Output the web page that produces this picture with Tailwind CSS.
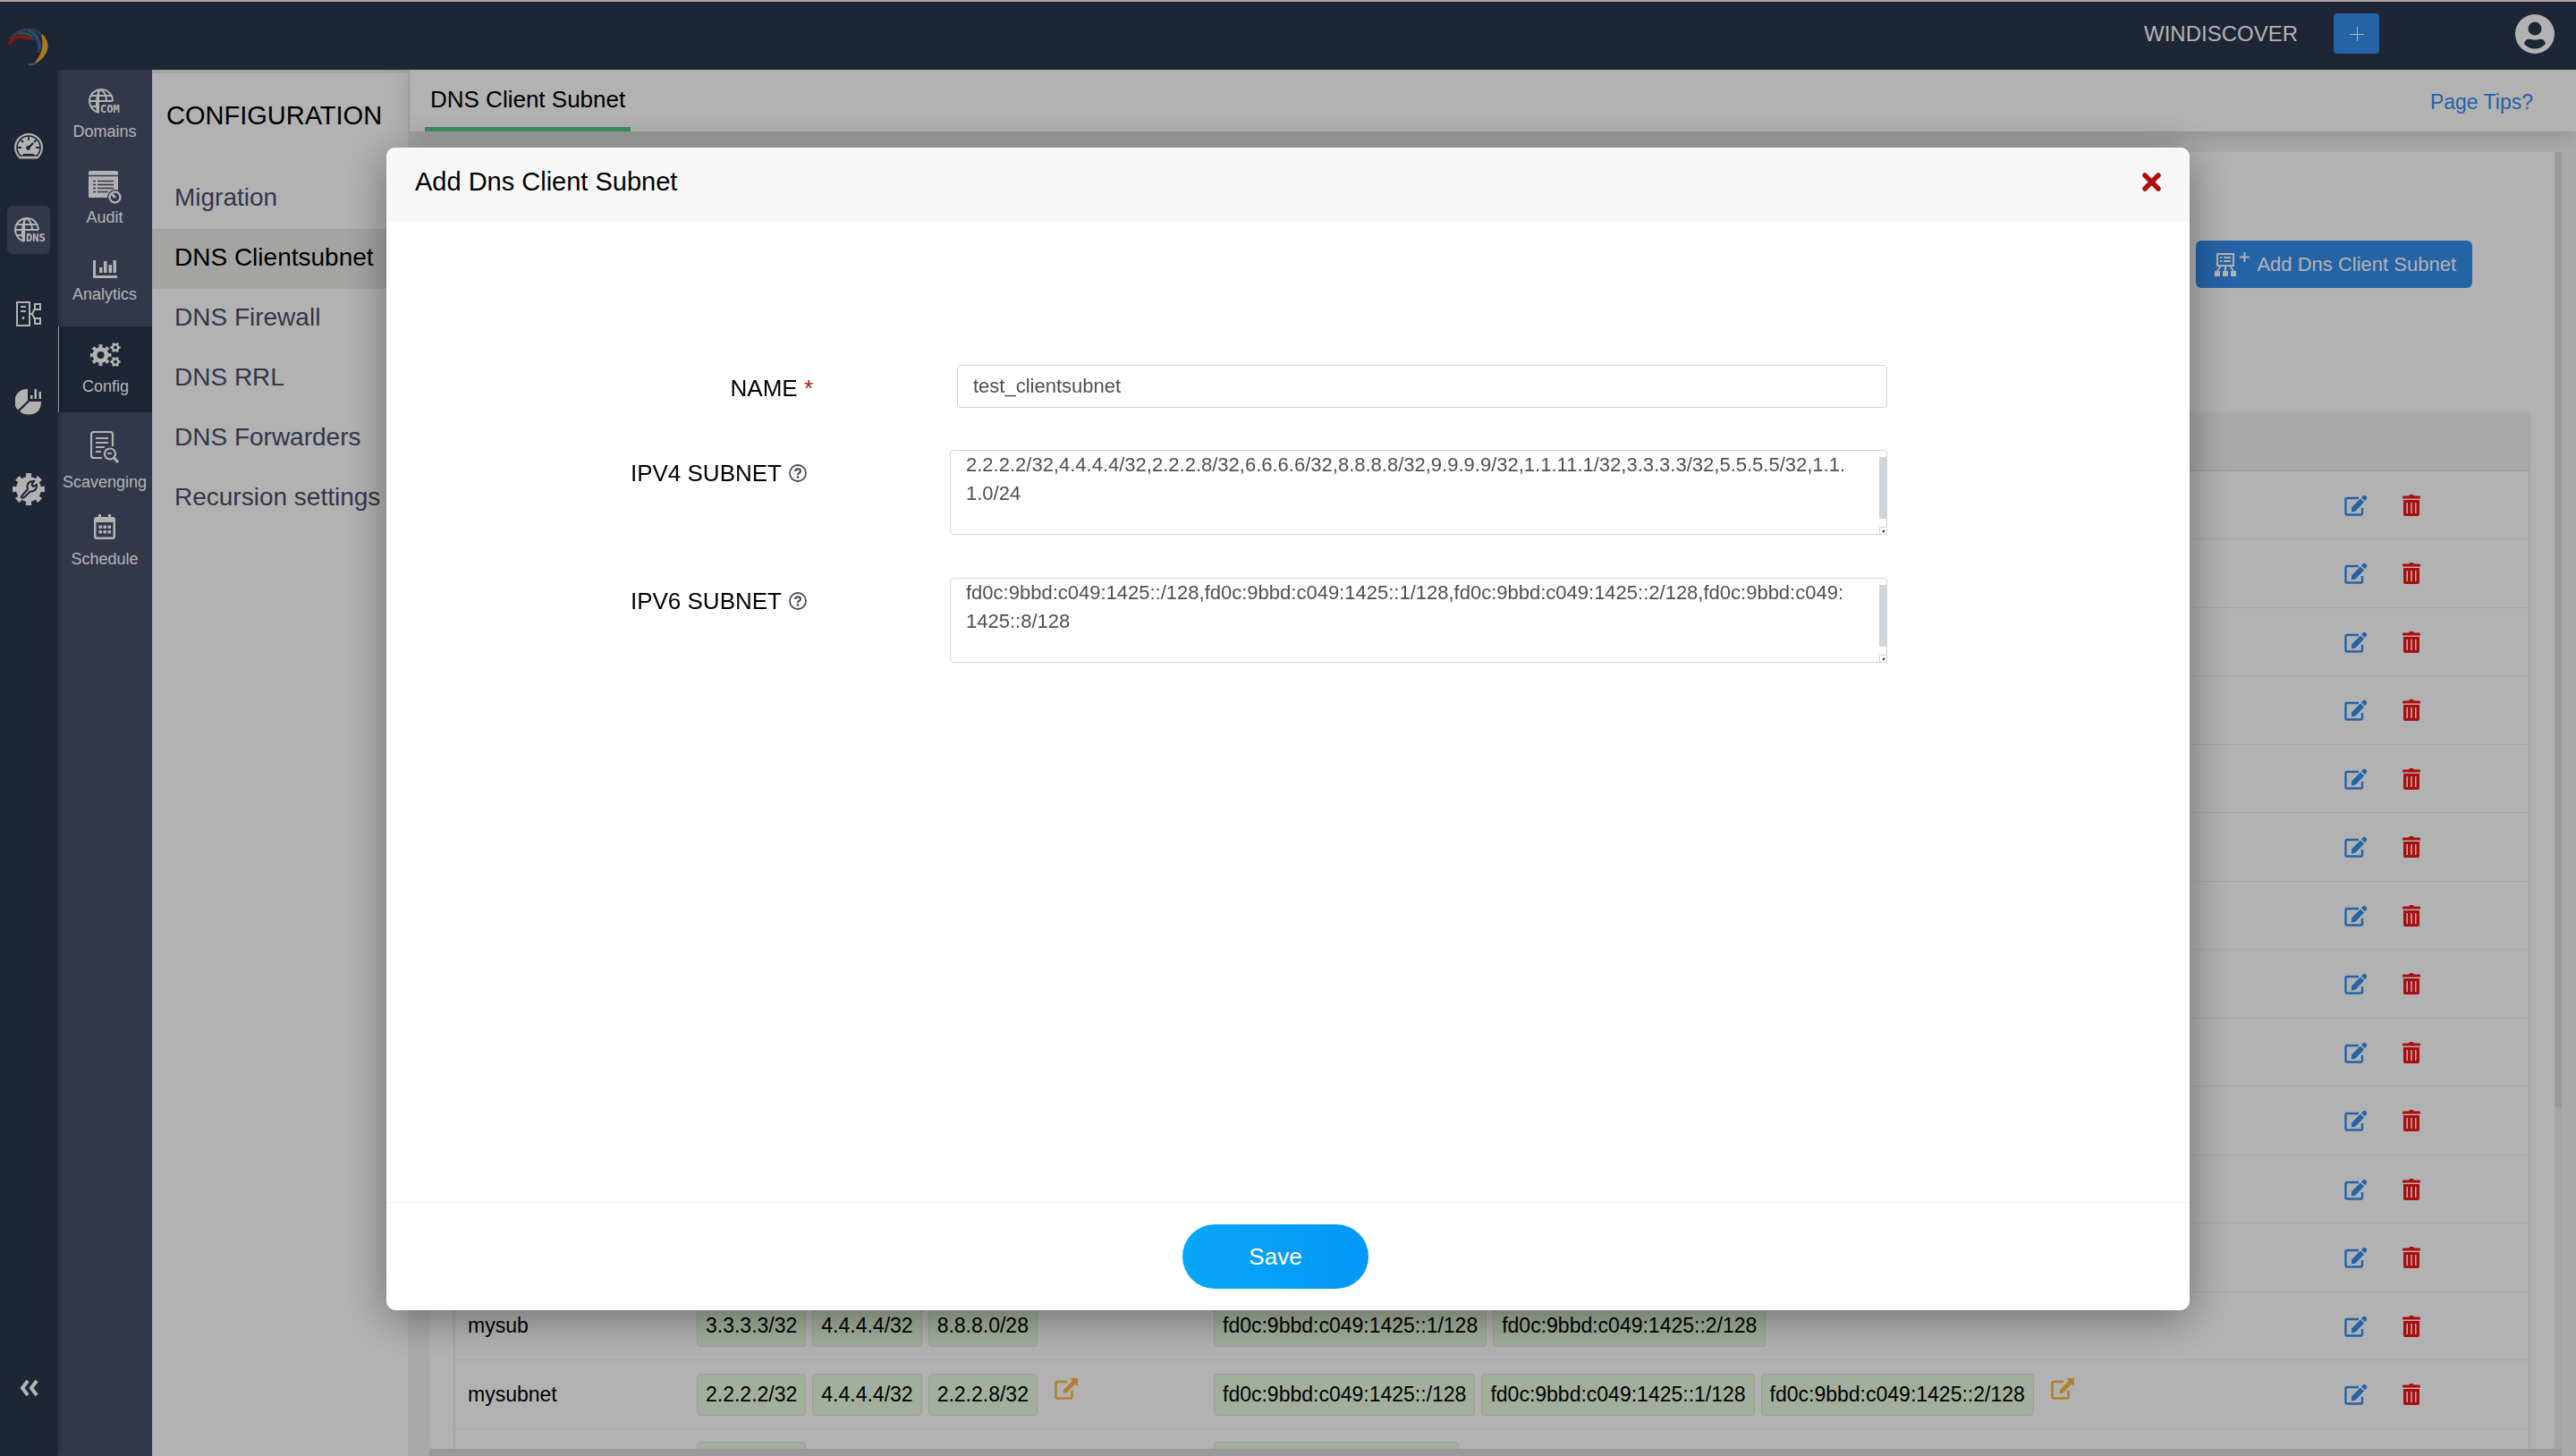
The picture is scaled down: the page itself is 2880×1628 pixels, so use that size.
<!DOCTYPE html>
<html lang="en">
<head>
    <meta charset="UTF-8">
    <meta name="viewport" content="width=device-width, initial-scale=1.0">
    <title>DNS Client Subnet</title>
    <script src="https://cdn.jsdelivr.net/npm/@tailwindcss/browser@4"></script>
    <style>
        body {
            font-family: 'Liberation Sans', Arial, sans-serif;
        }
    </style>
</head>
<body class="h-screen overflow-hidden bg-white text-black">

    <!-- Shared icons -->
    <svg class="hidden" aria-hidden="true">
        <symbol id="icon-globe" viewBox="0 0 34 28">
            <g fill="none" stroke="currentColor" stroke-width="2">
                <path d="M27 14A13 13 0 1 0 11 26.700"/>
                <path d="M11 27V1.500M14 1C8 5 8 22 11 27M14 1C18 4 20 8 20 14"/>
                <path d="M3 8H25M1 14H27M2 20H11"/>
            </g>
        </symbol>
        <symbol id="icon-edit" viewBox="0 0 26 24">
            <path d="M16 4H3Q1.500 4 1.500 5.500V21Q1.500 22.500 3 22.500H18.500Q20 22.500 20 21V15" fill="none" stroke="currentColor" stroke-width="2.400"/>
            <path d="M18 4.500L22 8.500L12.500 18.500L8 19.500L8 14.500Z" fill="currentColor"/>
            <path d="M19 3.500L21 1.200Q22.500 0 24.300 1.700Q26 3.500 24.800 5L23 7.300Z" fill="currentColor"/>
        </symbol>
        <symbol id="icon-trash" viewBox="0 0 20 24">
            <path d="M7 1.500Q7.300 0 9 0H11Q12.700 0 13 1.500H19Q20 1.500 20 3V4.500H0V3Q0 1.500 1 1.500Z" fill="currentColor"/>
            <path fill-rule="evenodd" d="M1 6H19V22Q19 24 17 24H3Q1 24 1 22ZM4.500 9V21H6V9ZM9.200 9V21H10.800V9ZM14 9V21H15.500V9Z" fill="currentColor"/>
        </symbol>
        <symbol id="icon-external" viewBox="0 0 26 24">
            <path d="M14 4H3Q1.500 4 1.500 5.500V21Q1.500 22.500 3 22.500H18Q19.500 22.500 19.500 21V14" fill="none" stroke="currentColor" stroke-width="2.600"/>
            <path d="M17 0H26V9L23 6.500L13.500 16.500L9.500 17L10 13L20 3Z" fill="currentColor"/>
        </symbol>
        <symbol id="icon-help" viewBox="0 0 20 20">
            <circle cx="10" cy="10" r="9" fill="none" stroke="currentColor" stroke-width="1.800"/>
            <path d="M7 8Q7 5.300 10 5.300Q13 5.300 13 7.800Q13 9.300 11.300 10Q10 10.600 10 12" fill="none" stroke="currentColor" stroke-width="2.200"/>
            <circle cx="10" cy="14.500" r="1.400" fill="currentColor"/>
        </symbol>
    </svg>

    <div class="flex h-full border-t-2 border-[#ffe4ea] overflow-hidden">

        <!-- Product rail -->
        <nav aria-label="Products" class="relative z-10 flex w-16 shrink-0 flex-col items-center bg-[#2c354c] text-white shadow-[2px_0_6px_rgba(0,0,0,0.3)]">
            <a href="#" aria-label="Home" class="mt-7">
                <svg class="h-11 w-12" viewBox="0 0 48 44" fill="none">
                    <path d="M3 14Q15 0 31 4Q40 8 43 16" stroke="#4d5568" stroke-width="3"/>
                    <path d="M28 8Q38 16 35 29M12 8Q22 7 30 15" stroke="#4d5568" stroke-width="3"/>
                    <path d="M2 20Q9 6 26 14" stroke="#c81e1e" stroke-width="3"/>
                    <path d="M14 7Q23 6 28 11" stroke="#3d8a5c" stroke-width="2"/>
                    <path d="M23 4Q35 6 37 25" stroke="#2f6fc4" stroke-width="3"/>
                    <path d="M39 9Q53 25 32 40Q44 26 39 9Z" fill="#f5a930" stroke="#f5a930" stroke-width="2"/>
                    <path d="M33 40Q29 43 24 42" stroke="#7b808c" stroke-width="2"/>
                </svg>
            </a>
            <a href="#" aria-label="Dashboard" class="mt-[62px] flex h-[54px] w-12 items-center justify-center">
                <svg class="h-[29px] w-8" viewBox="0 0 32 29">
                    <path d="M6 28.500Q0 23 0 16A16 16 0 0 1 32 16Q32 23 26 28.500Z" fill="currentColor"/>
                    <path d="M6.500 25Q3 21 3 16A13 13 0 0 1 29 16Q29 21 25.500 25Z" fill="none" stroke="#2c354c" stroke-width="1.600"/>
                    <g stroke="#2c354c" stroke-width="1.800">
                        <path d="M16 4V8M7.500 7.500L10 10M24.500 7.500L22 10M4 16H8M24 16H28M10 24H22"/>
                        <path d="M16 16L21 11" stroke-width="2.400"/>
                    </g>
                    <circle cx="15.500" cy="16.500" r="2.400" fill="#2c354c"/>
                </svg>
            </a>
            <a href="#" aria-label="DNS" class="mt-10 flex h-[54px] w-12 items-center justify-center rounded-md bg-[#4a506a] pl-1">
                <svg class="h-7 w-9 shrink-0" viewBox="0 0 36 28">
                    <use href="#icon-globe" width="34" height="28"/>
                    <rect x="12" y="16" width="24" height="12" fill="#4a506a"/>
                    <text x="13" y="27" font-family="DejaVu Sans Mono" font-weight="bold" font-size="12" fill="currentColor">DNS</text>
                </svg>
            </a>
            <a href="#" aria-label="Servers" class="mt-10 flex h-[54px] w-12 items-center justify-center">
                <svg class="h-7 w-7" viewBox="0 0 28 28" fill="none" stroke="currentColor" stroke-width="2">
                    <path d="M1 1H15V27H1Z"/>
                    <path d="M5 6H11M5 11H11"/>
                    <path d="M8 17V20" stroke-width="2.500"/>
                    <path d="M21 3H27V9H21ZM21 19H27V25H21Z"/>
                    <path d="M16 14H18L21 8M18 14L21 20"/>
                </svg>
            </a>
            <a href="#" aria-label="Reports" class="mt-11 flex h-[54px] w-12 items-center justify-center">
                <svg class="h-[30px] w-[30px]" viewBox="0 0 30 30" fill="currentColor">
                    <path d="M14 1A14 14 0 0 0 3 24.500L14 14Z"/>
                    <path d="M16 15H29Q29 29 15 29.500Q9 29.500 5 26Z"/>
                    <path d="M17 8H19.500V12H17ZM21.500 1H24V12H21.500ZM26.500 4H29V12H26.500Z"/>
                </svg>
            </a>
            <a href="#" aria-label="Settings" class="mt-11 flex h-[54px] w-12 items-center justify-center">
                <svg class="h-9 w-9" viewBox="0 0 36 36">
                    <circle cx="18" cy="18" r="15" fill="none" stroke="currentColor" stroke-width="6" pathLength="16" stroke-dasharray="1 1" stroke-dashoffset="0.500"/>
                    <circle cx="18" cy="18" r="14" fill="currentColor"/>
                    <path d="M10 26L17 18Q15 12 20 9.500L24 9L21.500 13L23 15L27 13Q27.500 19 22 20.500H20L12.500 27.500Q9 28 10 26Z" fill="none" stroke="#2c354c" stroke-width="2"/>
                </svg>
            </a>
            <button type="button" aria-label="Collapse" class="mt-auto mb-[66px]">
                <svg class="h-5 w-6" viewBox="0 0 24 20" fill="none" stroke="currentColor" stroke-width="4">
                    <path d="M11 2L5 10L11 18M21 2L15 10L21 18"/>
                </svg>
            </button>
        </nav>

        <div class="flex min-w-0 flex-1 flex-col">
            <!-- Top bar -->
            <header class="relative z-20 flex h-[76px] shrink-0 items-center justify-end bg-[#2c354c] pr-6 pb-[5px] text-white">
                <span class="text-2xl">WINDISCOVER</span>
                <button type="button" aria-label="Add" class="ml-10 flex h-[45px] w-[51px] items-center justify-center rounded bg-[#358eef]">
                    <svg class="h-4 w-4" viewBox="0 0 16 16" stroke="currentColor"><path d="M8.500 0V16M0 8.500H16"/></svg>
                </button>
                <button type="button" aria-label="Account" class="ml-38">
                    <svg class="h-11 w-11" viewBox="0 0 44 44">
                        <circle cx="22" cy="22" r="22" fill="currentColor"/>
                        <circle cx="22" cy="16" r="7.500" fill="#2c354c"/>
                        <path d="M10 33Q11 27 18 28Q22 29 26 28Q33 27 34 33Q29 38.500 22 38.500Q15 38.500 10 33Z" fill="#2c354c"/>
                    </svg>
                </button>
            </header>

            <div class="flex min-h-0 flex-1">
                <!-- Section nav -->
                <nav aria-label="Sections" class="flex w-[106px] shrink-0 flex-col bg-[#4a506a] text-lg/5 text-white">
                    <a href="#" class="flex h-[97px] flex-col items-center justify-end gap-[10px] pb-[18px]">
                        <svg class="h-7 w-9" viewBox="0 0 36 28">
                            <use href="#icon-globe" width="34" height="28"/>
                            <rect x="12" y="16" width="24" height="12" fill="#4a506a"/>
                            <text x="13" y="27" font-family="DejaVu Sans Mono" font-weight="bold" font-size="12" fill="currentColor">COM</text>
                        </svg>
                        Domains
                    </a>
                    <a href="#" class="flex h-24 flex-col items-center justify-end gap-[5px] pb-[18px]">
                        <svg class="h-[37px] w-[37px]" viewBox="0 0 37 37">
                            <path d="M2 0H31Q33 0 33 2V30H0V2Q0 0 2 0Z" fill="currentColor"/>
                            <path d="M0 5.500H33M5 11.500H8M10 11.500H28M5 15.500H8M10 15.500H28M5 19.500H8M10 19.500H28M5 23.500H8M10 23.500H22" stroke="#4a506a" stroke-width="1.500"/>
                            <circle cx="29.500" cy="29.500" r="8.500" fill="#4a506a"/>
                            <circle cx="29.500" cy="29.500" r="6" fill="none" stroke="currentColor" stroke-width="2.400"/>
                            <path d="M26 26L30 30" stroke="currentColor" stroke-width="3"/>
                        </svg>
                        Audit
                    </a>
                    <a href="#" class="flex h-[94px] flex-col items-center justify-end gap-2 pb-[26px]">
                        <svg class="h-[21px] w-[27px]" viewBox="0 0 27 21" fill="currentColor">
                            <path d="M0 1H3V18H27V21H1Q0 21 0 20ZM7 9H10.500V15H7ZM12 2H15.500V15H12ZM17.500 6H21V15H17.500ZM22.500 1H26V15H22.500Z"/>
                        </svg>
                        Analytics
                    </a>
                    <a href="#" aria-current="page" class="ml-px flex h-24 flex-col items-center justify-end gap-3 border-l border-white bg-[#2c354c] pb-[19px]">
                        <svg class="h-[27px] w-[34px]" viewBox="0 0 34 27" fill="none" stroke="currentColor">
                            <circle cx="11.500" cy="14" r="6.500" stroke-width="5"/>
                            <circle cx="11.500" cy="14" r="10" stroke-width="4" pathLength="16" stroke-dasharray="1 1" stroke-dashoffset="0.500"/>
                            <circle cx="28" cy="5.500" r="3.200" stroke-width="2.400"/>
                            <circle cx="28" cy="5.500" r="4.700" stroke-width="2" pathLength="12" stroke-dasharray="1 1" stroke-dashoffset="0.500"/>
                            <circle cx="28" cy="21.500" r="3.200" stroke-width="2.400"/>
                            <circle cx="28" cy="21.500" r="4.700" stroke-width="2" pathLength="12" stroke-dasharray="1 1" stroke-dashoffset="0.500"/>
                        </svg>
                        Config
                    </a>
                    <a href="#" class="flex h-[106px] flex-col items-center justify-end gap-[11px] pb-[18px]">
                        <svg class="h-9 w-8" viewBox="0 0 32 36" fill="none" stroke="currentColor" stroke-width="2.200">
                            <path d="M13 30H4Q1 30 1 27V4Q1 1 4 1H22Q25 1 25 4V17"/>
                            <path d="M6 8H20M6 13H20M6 18H16M6 23H12" stroke-width="1.800"/>
                            <circle cx="22" cy="25.500" r="6"/>
                            <path d="M19 25H24" stroke-width="1.800"/>
                            <path d="M26.500 30L31 35" stroke-width="3"/>
                        </svg>
                        Scavenging
                    </a>
                    <a href="#" class="flex h-[86px] flex-col items-center justify-end gap-3 pb-[18px]">
                        <svg class="h-7 w-6" viewBox="0 0 24 28">
                            <path fill-rule="evenodd" d="M5 0H8V3H16V0H19V3H21Q24 3 24 6V25Q24 28 21 28H3Q0 28 0 25V6Q0 3 3 3H5ZM2.500 9V25.500H21.500V9Z" fill="currentColor"/>
                            <path d="M5.500 12.500H9V16H5.500ZM10.500 12.500H14V16H10.500ZM15.500 12.500H19V16H15.500ZM5.500 18H9V21.500H5.500ZM10.500 18H14V21.500H10.500ZM15.500 18H19V21.500H15.500Z" fill="currentColor"/>
                        </svg>
                        Schedule
                    </a>
                </nav>

                <!-- Configuration menu -->
                <aside class="w-72 shrink-0 border-t-4 border-r border-t-[#ebebe9] border-r-[#e4e4e4] bg-white">
                    <h1 class="pt-[27px] pl-4 text-[29px]/[40px]">CONFIGURATION</h1>
                    <ul class="mt-10 text-[28px]/[63px] text-[#4a506a]">
                        <li><a href="#" class="block pb-1 pl-[25px]">Migration</a></li>
                        <li><a href="#" aria-current="page" class="block bg-[#ebebea] pb-1 pl-[25px] text-black">DNS Clientsubnet</a></li>
                        <li><a href="#" class="block pb-1 pl-[25px]">DNS Firewall</a></li>
                        <li><a href="#" class="block pb-1 pl-[25px]">DNS RRL</a></li>
                        <li><a href="#" class="block pb-1 pl-[25px]">DNS Forwarders</a></li>
                        <li><a href="#" class="block pb-1 pl-[25px]">Recursion settings</a></li>
                    </ul>
                </aside>

                <main class="flex min-w-0 flex-1 flex-col bg-[#f3f3f2]">
                    <div class="flex h-[69px] shrink-0 items-stretch justify-between bg-white pr-12 pl-[17px] shadow-[0_2px_24px_rgba(0,0,0,0.18)]">
                        <a href="#" class="border-b-[5px] border-[#52cf7c] px-[6px] text-[26px]/[66px]">DNS Client Subnet</a>
                        <a href="#" class="text-[23px]/[72px] text-[#358eef]">Page Tips?</a>
                    </div>

                    <div class="mt-[23px] mr-4 ml-[22px] flex min-h-0 flex-1">
                        <div class="flex min-w-0 flex-1 flex-col overflow-hidden rounded-b-md bg-white px-7">
                            <div class="flex justify-end pt-[99px] pr-16">
                                <button type="button" class="flex h-[53px] items-center rounded-md bg-[#358eef] pr-[18px] pl-5 text-[22px] text-white">
                                    <svg class="mr-2 h-7 w-10" viewBox="0 0 40 28" fill="none" stroke="currentColor" stroke-width="2">
                                        <path d="M4 2H22V15H4ZM7 6H9M11 6H19M7 10H9M11 10H19"/>
                                        <path d="M8 15L4 21M13 15V21M18 15L22 21"/>
                                        <path d="M1 21H7V27H1ZM10 21H16V27H10ZM19 21H25V27H19Z" fill="currentColor" stroke="none"/>
                                        <path d="M29 5.500H40M34.500 0V11"/>
                                    </svg>
                                    Add Dns Client Subnet
                                </button>
                            </div>
                            <table class="mt-[141px] w-full table-fixed border-separate border-spacing-0 border-x border-[#e8e8e8] text-[23px] shadow-[0_0_4px_rgba(0,0,0,0.12)]">
                                <colgroup>
                                    <col class="w-[270px]">
                                    <col class="w-[578px]">
                                    <col>
                                    <col class="w-[206px]">
                                </colgroup>
                                <thead>
                                    <tr class="h-16 bg-[#f3f3f3]">
                                        <th class="border-b border-[#dcdcdc]" aria-label="Name"></th>
                                        <th class="border-b border-[#dcdcdc]" aria-label="IPv4 subnet"></th>
                                        <th class="border-b border-[#dcdcdc]" aria-label="IPv6 subnet"></th>
                                        <th class="border-b border-[#dcdcdc]" aria-label="Actions"></th>
                                    </tr>
                                </thead>
                                <tbody id="subnetRows"></tbody>
                            </table>
                        </div>
                        <div class="w-2 shrink-0 bg-[#ededed]"><div class="h-[1068px] bg-[#dbdbdb]"></div></div>
                    </div>
                    <div class="mr-4 ml-[22px] h-2 shrink-0 bg-[#dbdbdb]"></div>
                </main>
            </div>
        </div>
    </div>

    <!-- Add subnet dialog -->
    <div class="fixed inset-0 z-50 bg-black/30 pt-[165px]">
        <form role="dialog" aria-labelledby="dialogTitle" class="mx-auto flex h-[1300px] w-[70%] flex-col overflow-hidden rounded-[10px] bg-white shadow-[0_8px_48px_rgba(0,0,0,0.4)]">
            <div class="flex h-[83px] shrink-0 items-center justify-between bg-[#f7f7f7] pr-8 pb-[6px] pl-8">
                <h2 id="dialogTitle" class="text-[29px]">Add Dns Client Subnet</h2>
                <button type="button" aria-label="Close">
                    <svg class="h-[21px] w-[21px]" viewBox="0 0 21 21" stroke="#ad0f0f" stroke-width="5.500" stroke-linecap="round"><path d="M3 3L18 18M18 3L3 18"/></svg>
                </button>
            </div>

            <div class="flex-1 pt-40 pr-[338px] text-[26px]">
                <div class="flex items-start">
                    <label for="subnetName" class="mr-[161px] w-[477px] shrink-0 text-right leading-[52px]">NAME <span class="text-[#ad0f0f]">*</span></label>
                    <input id="subnetName" type="text" value="test_clientsubnet" class="h-12 min-w-0 flex-1 rounded border border-[#d0d5da] px-[17px] text-[22px] text-[#495057]">
                </div>

                <div class="mt-[43px] flex items-start">
                    <label for="ipv4Subnet" class="mr-40 flex w-[470px] shrink-0 items-center justify-end gap-2 leading-[52px]">IPV4 SUBNET
                        <svg class="h-5 w-5 text-[#495057]"><use href="#icon-help"/></svg>
                    </label>
                    <div class="relative flex min-w-0 flex-1">
                        <textarea id="ipv4Subnet" class="h-[95px] w-full resize-none overflow-hidden rounded border border-[#d0d5da] pr-10 pl-[17px] text-[22px]/8 break-all text-[#495057]">2.2.2.2/32,4.4.4.4/32,2.2.2.8/32,6.6.6.6/32,8.8.8.8/32,9.9.9.9/32,1.1.11.1/32,3.3.3.3/32,5.5.5.5/32,1.1.1.0/24</textarea>
                        <div class="absolute top-2 right-px h-[69px] w-2 bg-[#d0d5da]"></div>
                        <svg class="absolute right-0 bottom-0 h-[9px] w-[9px]" viewBox="0 0 9 9"><path d="M0.500 9V0.500H9" fill="white" stroke="#d0d5da"/><path d="M4 6L6 4" stroke="#333" stroke-width="2"/></svg>
                    </div>
                </div>

                <div class="mt-12 flex items-start">
                    <label for="ipv6Subnet" class="mr-40 flex w-[470px] shrink-0 items-center justify-end gap-2 leading-[52px]">IPV6 SUBNET
                        <svg class="h-5 w-5 text-[#495057]"><use href="#icon-help"/></svg>
                    </label>
                    <div class="relative flex min-w-0 flex-1">
                        <textarea id="ipv6Subnet" class="h-[95px] w-full resize-none overflow-hidden rounded border border-[#d0d5da] pr-10 pl-[17px] text-[22px]/8 break-all text-[#495057]">fd0c:9bbd:c049:1425::/128,fd0c:9bbd:c049:1425::1/128,fd0c:9bbd:c049:1425::2/128,fd0c:9bbd:c049:1425::8/128</textarea>
                        <div class="absolute top-2 right-px h-[69px] w-2 bg-[#d0d5da]"></div>
                        <svg class="absolute right-0 bottom-0 h-[9px] w-[9px]" viewBox="0 0 9 9"><path d="M0.500 9V0.500H9" fill="white" stroke="#d0d5da"/><path d="M4 6L6 4" stroke="#333" stroke-width="2"/></svg>
                    </div>
                </div>
            </div>

            <div class="flex h-[121px] shrink-0 items-center justify-center border-t border-[#f5f5f5] pr-7">
                <button type="submit" class="h-[72px] w-52 rounded-full bg-linear-to-r from-[#08a6f6] to-[#0398f8] text-[26px] text-white">Save</button>
            </div>
        </form>
    </div>

    <script>
        const subnets = Array.from({ length: 12 }, () => ({ name: '', ipv4: [], ipv6: [] }));
        subnets.push(
            { name: 'mysub', ipv4: ['3.3.3.3/32', '4.4.4.4/32', '8.8.8.0/28'], ipv6: ['fd0c:9bbd:c049:1425::1/128', 'fd0c:9bbd:c049:1425::2/128'] },
            { name: 'mysubnet', ipv4: ['2.2.2.2/32', '4.4.4.4/32', '2.2.2.8/32'], ipv6: ['fd0c:9bbd:c049:1425::/128', 'fd0c:9bbd:c049:1425::1/128', 'fd0c:9bbd:c049:1425::2/128'], more: true },
            { name: '', ipv4: [''], ipv6: [''] }
        );

        const chips = (list, width, more) => `
            <div class="flex items-center gap-[7px]">
                ${list.map(ip => `<span class="h-[47px] ${width} rounded border border-[#dde6d8] bg-[#e9fbe0] px-[9px] leading-[45px] whitespace-nowrap">${ip}</span>`).join('')}
                ${more ? '<a href="#" aria-label="Show all" class="ml-3 pb-3 text-[#ffb83d]"><svg class="h-6 w-[26px]"><use href="#icon-external"/></svg></a>' : ''}
            </div>`;

        document.getElementById('subnetRows').innerHTML = subnets.map(s => `
            <tr class="odd:h-[76px] even:h-[77px]">
                <td class="border-b border-[#efefef] pl-[14px]">${s.name}</td>
                <td class="border-b border-[#efefef]">${chips(s.ipv4, 'min-w-[122px]', s.more)}</td>
                <td class="border-b border-[#efefef]">${chips(s.ipv6, 'min-w-[274px]', s.more)}</td>
                <td class="border-b border-[#efefef]">
                    <div class="flex items-center gap-[39px]">
                        <button type="button" aria-label="Edit" class="text-[#358eef]"><svg class="h-6 w-[26px]"><use href="#icon-edit"/></svg></button>
                        <button type="button" aria-label="Delete" class="text-[#f31616]"><svg class="h-6 w-5"><use href="#icon-trash"/></svg></button>
                    </div>
                </td>
            </tr>`).join('');
    </script>
</body>
</html>
